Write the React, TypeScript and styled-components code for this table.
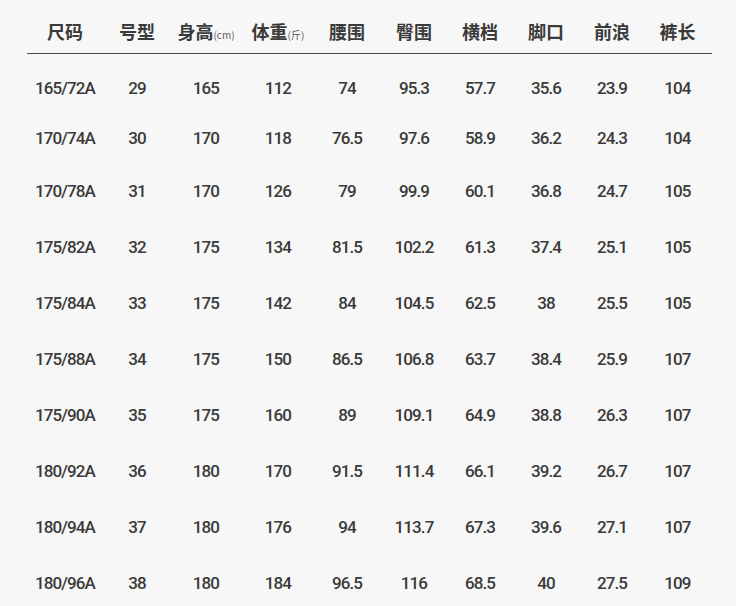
import React from "react";
import styled, { createGlobalStyle } from "styled-components";

const GlobalStyle = createGlobalStyle`
  html, body {
    margin: 0;
    padding: 0;
    background: #f7f7f7;
  }
  body {
    font-family: Roboto, "Noto Sans CJK SC", sans-serif;
    color: #383838;
  }
`;

const COLUMNS = "76px 68px 70px 74px 64px 70px 62px 70px 62px 69px";

const Page = styled.div`
  width: 736px;
  height: 606px;
  overflow: hidden;
  padding-left: 27px;
  box-sizing: border-box;
`;

const Table = styled.div`
  width: 685px;
  display: flex;
  flex-direction: column;
`;

const HeaderRow = styled.div`
  display: grid;
  grid-template-columns: ${COLUMNS};
  align-items: center;
  height: 54px;
  padding-top: 8px;
  box-sizing: border-box;
  border-bottom: 1.5px solid #4a4a4a;
`;

const HeaderCell = styled.div`
  text-align: center;
  white-space: nowrap;
  font-family: "Noto Sans CJK SC", sans-serif;
  font-size: 18px;
  font-weight: 700;
  color: #3a3a3a;
  line-height: 1;
`;

const Unit = styled.span`
  font-family: "Noto Sans CJK SC", sans-serif;
  font-size: 10px;
  font-weight: 400;
  color: #5a5a5a;
`;

const Body = styled.div`
  display: flex;
  flex-direction: column;
  padding-top: 9px;
`;

const Row = styled.div<{ $compact?: boolean }>`
  display: grid;
  grid-template-columns: ${COLUMNS};
  align-items: center;
  height: ${(p) => (p.$compact ? 50 : 56)}px;
`;

const Cell = styled.div`
  text-align: center;
  white-space: nowrap;
  font-family: Roboto, sans-serif;
  font-size: 17px;
  font-weight: 500;
  letter-spacing: -0.9px;
  color: #3a3a3a;
  line-height: 1;
`;

const headers: { label: string; unit?: string }[] = [
  { label: "尺码" },
  { label: "号型" },
  { label: "身高", unit: "(cm)" },
  { label: "体重", unit: "(斤)" },
  { label: "腰围" },
  { label: "臀围" },
  { label: "横档" },
  { label: "脚口" },
  { label: "前浪" },
  { label: "裤长" },
];

const rows: string[][] = [
  ["165/72A", "29", "165", "112", "74", "95.3", "57.7", "35.6", "23.9", "104"],
  ["170/74A", "30", "170", "118", "76.5", "97.6", "58.9", "36.2", "24.3", "104"],
  ["170/78A", "31", "170", "126", "79", "99.9", "60.1", "36.8", "24.7", "105"],
  ["175/82A", "32", "175", "134", "81.5", "102.2", "61.3", "37.4", "25.1", "105"],
  ["175/84A", "33", "175", "142", "84", "104.5", "62.5", "38", "25.5", "105"],
  ["175/88A", "34", "175", "150", "86.5", "106.8", "63.7", "38.4", "25.9", "107"],
  ["175/90A", "35", "175", "160", "89", "109.1", "64.9", "38.8", "26.3", "107"],
  ["180/92A", "36", "180", "170", "91.5", "111.4", "66.1", "39.2", "26.7", "107"],
  ["180/94A", "37", "180", "176", "94", "113.7", "67.3", "39.6", "27.1", "107"],
  ["180/96A", "38", "180", "184", "96.5", "116", "68.5", "40", "27.5", "109"],
];

export default function App() {
  return (
    <>
      <GlobalStyle />
      <Page>
        <Table>
          <HeaderRow>
            {headers.map((h) => (
              <HeaderCell key={h.label}>
                {h.label}
                {h.unit && <Unit>{h.unit}</Unit>}
              </HeaderCell>
            ))}
          </HeaderRow>
          <Body>
            {rows.map((r, i) => (
              <Row key={r[0]} $compact={i < 2}>
                {r.map((v, j) => (
                  <Cell key={j}>{v}</Cell>
                ))}
              </Row>
            ))}
          </Body>
        </Table>
      </Page>
    </>
  );
}
